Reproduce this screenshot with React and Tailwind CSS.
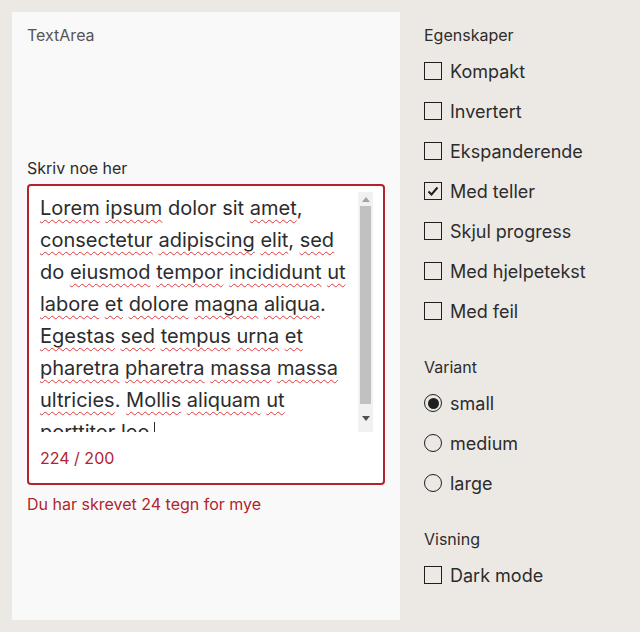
import { useState } from 'react'

const FONT = { fontFamily: 'Inter, "Noto Sans", sans-serif' }

// words that the spellchecker flags get a red wavy underline
const LINES = [
  [['Lorem', 1], ['ipsum', 1], ['dolor', 0], ['sit', 0], ['amet', 1, ',']],
  [['consectetur', 1], ['adipiscing', 1], ['elit', 1, ','], ['sed', 1]],
  [['do', 0], ['eiusmod', 1], ['tempor', 1], ['incididunt', 1], ['ut', 1]],
  [['labore', 1], ['et', 1], ['dolore', 1], ['magna', 1], ['aliqua', 1, '.']],
  [['Egestas', 1], ['sed', 1], ['tempus', 1], ['urna', 1], ['et', 1]],
  [['pharetra', 1], ['pharetra', 1], ['massa', 1], ['massa', 1]],
  [['ultricies', 1, '.'], ['Mollis', 1], ['aliquam', 1], ['ut', 1]],
  [['porttitor', 1], ['leo', 1]],
]

function Word({ w, bad, punct }) {
  return (
    <>
      <span className={bad ? 'underline decoration-wavy decoration-[#e0383e] decoration-1 underline-offset-[4px]' : ''}>{w}</span>
      {punct}
    </>
  )
}

function Checkbox({ label, checked }) {
  return (
    <label className="flex items-center gap-[8px] h-[40px] text-[18px] text-[#2c2c2c]">
      <span className="w-[18px] h-[18px] border-[1.5px] border-[#1f1f1f] flex items-center justify-center">
        {checked && (
          <svg width="14" height="14" viewBox="0 0 14 14">
            <path d="M2.5 7.5 L5.5 10.5 L11.5 3.5" fill="none" stroke="#1f1f1f" strokeWidth="2" />
          </svg>
        )}
      </span>
      {label}
    </label>
  )
}

function Radio({ label, checked }) {
  return (
    <label className="flex items-center gap-[8px] h-[40px] text-[18px] text-[#2c2c2c]">
      <span className="w-[18px] h-[18px] rounded-full border-[1.5px] border-[#1f1f1f] flex items-center justify-center">
        {checked && <span className="w-[11px] h-[11px] rounded-full bg-[#1f1f1f]" />}
      </span>
      {label}
    </label>
  )
}

function Heading({ children }) {
  return <div className="text-[16px] leading-[20px] text-[#2c2c2c] mb-[6px]">{children}</div>
}

export default function App() {
  const [variant] = useState('small')

  return (
    <div className="w-[640px] h-[632px] bg-[#ece9e5] flex p-[12px] gap-[24px]" style={FONT}>
      {/* Preview panel */}
      <div className="w-[388px] h-[608px] bg-[#f9f9f9] px-[15px] pt-[13px]">
        <div className="text-[16px] leading-[20px] text-[#555555]">TextArea</div>

        <div className="mt-[113px] text-[16px] leading-[20px] text-[#2c2c2c]">Skriv noe her</div>

        <div className="mt-[6px] w-[358px] border-2 border-[#b1242b] rounded-[4px] bg-white pl-[11px] pr-[10px] pt-[6px] pb-[15px]">
          <div className="flex">
            <div className="flex-1 h-[240px] overflow-hidden text-[20px] leading-[32px] text-[#2c2c2c]">
              {LINES.map((line, i) => (
                <div key={i} className="whitespace-nowrap">
                  {line.map(([w, bad, punct], j) => (
                    <span key={j}>
                      {j > 0 && ' '}
                      <Word w={w} bad={bad} punct={punct} />
                    </span>
                  ))}
                  {i === LINES.length - 1 && <span className="inline-block w-[1px] h-[20px] bg-[#2c2c2c] ml-[4px] align-[-3px]" />}
                </div>
              ))}
            </div>
            {/* scrollbar */}
            <div className="w-[15px] h-[240px] bg-[#f1f1f1] flex flex-col items-center">
              <div className="h-[14px] flex items-center justify-center">
                <svg width="8" height="5" viewBox="0 0 8 5"><path d="M0 5 L4 0 L8 5 Z" fill="#a3a3a3" /></svg>
              </div>
              <div className="w-[11px] h-[198px] bg-[#c1c1c1]" />
              <div className="flex-1 flex items-center justify-center">
                <svg width="8" height="5" viewBox="0 0 8 5"><path d="M0 0 L4 5 L8 0 Z" fill="#505050" /></svg>
              </div>
            </div>
          </div>
          <div className="mt-[16px] text-[16px] leading-[20px] text-[#b1242b]">224 / 200</div>
        </div>

        <div className="mt-[9px] text-[16px] leading-[20px] text-[#b1242b]">Du har skrevet 24 tegn for mye</div>
      </div>

      {/* Controls */}
      <div className="flex flex-col pt-[13px]">
        <Heading>Egenskaper</Heading>
        <Checkbox label="Kompakt" />
        <Checkbox label="Invertert" />
        <Checkbox label="Ekspanderende" />
        <Checkbox label="Med teller" checked />
        <Checkbox label="Skjul progress" />
        <Checkbox label="Med hjelpetekst" />
        <Checkbox label="Med feil" />

        <div className="mt-[26px]">
          <Heading>Variant</Heading>
          {['small', 'medium', 'large'].map(v => (
            <Radio key={v} label={v} checked={variant === v} />
          ))}
        </div>

        <div className="mt-[26px]">
          <Heading>Visning</Heading>
          <Checkbox label="Dark mode" />
        </div>
      </div>
    </div>
  )
}
